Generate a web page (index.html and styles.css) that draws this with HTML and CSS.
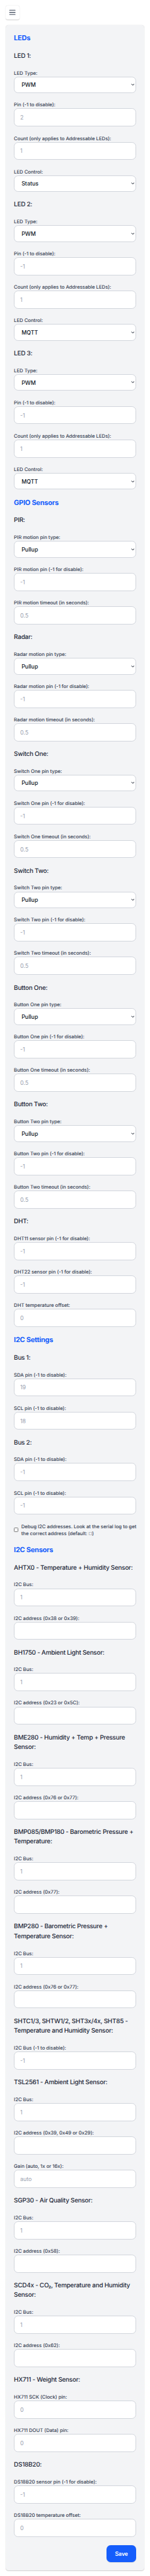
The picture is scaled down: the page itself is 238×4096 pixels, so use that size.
FILE: index.html
```html
<!DOCTYPE html>
<html lang="en">
<head>
<meta charset="utf-8">
<title>Hardware settings</title>
<link rel="stylesheet" href="styles.css">
</head>
<body>
<header class="topbar">
  <button class="menu" type="button" aria-label="Menu"><svg class="menu-icon" viewBox="0 0 24 24"><path d="M4 6h16M4 12h16M4 18h16"/></svg></button>
</header>
<svg width="0" height="0" class="defs"><symbol id="chevron" viewBox="0 0 10 6"><path d="M1 1.2l4 3.2 4-3.2"/></symbol></svg>
<form class="card">
  <h2>LEDs</h2>
  <h3>LED 1:</h3>
  <label class="field">LED Type:<span class="pick"><select><option>PWM</option></select><svg><use href="#chevron"/></svg></span></label>
  <label class="field">Pin (-1 to disable):<input placeholder="2"></label>
  <label class="field">Count (only applies to Addressable LEDs):<input placeholder="1"></label>
  <label class="field">LED Control:<span class="pick"><select><option>Status</option></select><svg><use href="#chevron"/></svg></span></label>
  <h3>LED 2:</h3>
  <label class="field">LED Type:<span class="pick"><select><option>PWM</option></select><svg><use href="#chevron"/></svg></span></label>
  <label class="field">Pin (-1 to disable):<input placeholder="-1"></label>
  <label class="field">Count (only applies to Addressable LEDs):<input placeholder="1"></label>
  <label class="field">LED Control:<span class="pick"><select><option>MQTT</option></select><svg><use href="#chevron"/></svg></span></label>
  <h3>LED 3:</h3>
  <label class="field">LED Type:<span class="pick"><select><option>PWM</option></select><svg><use href="#chevron"/></svg></span></label>
  <label class="field">Pin (-1 to disable):<input placeholder="-1"></label>
  <label class="field">Count (only applies to Addressable LEDs):<input placeholder="1"></label>
  <label class="field">LED Control:<span class="pick"><select><option>MQTT</option></select><svg><use href="#chevron"/></svg></span></label>

  <h2>GPIO Sensors</h2>
  <h3>PIR:</h3>
  <label class="field">PIR motion pin type:<span class="pick"><select><option>Pullup</option></select><svg><use href="#chevron"/></svg></span></label>
  <label class="field">PIR motion pin (-1 for disable):<input placeholder="-1"></label>
  <label class="field">PIR motion timeout (in seconds):<input placeholder="0.5"></label>
  <h3>Radar:</h3>
  <label class="field">Radar motion pin type:<span class="pick"><select><option>Pullup</option></select><svg><use href="#chevron"/></svg></span></label>
  <label class="field">Radar motion pin (-1 for disable):<input placeholder="-1"></label>
  <label class="field">Radar motion timeout (in seconds):<input placeholder="0.5"></label>
  <h3>Switch One:</h3>
  <label class="field">Switch One pin type:<span class="pick"><select><option>Pullup</option></select><svg><use href="#chevron"/></svg></span></label>
  <label class="field">Switch One pin (-1 for disable):<input placeholder="-1"></label>
  <label class="field">Switch One timeout (in seconds):<input placeholder="0.5"></label>
  <h3>Switch Two:</h3>
  <label class="field">Switch Two pin type:<span class="pick"><select><option>Pullup</option></select><svg><use href="#chevron"/></svg></span></label>
  <label class="field">Switch Two pin (-1 for disable):<input placeholder="-1"></label>
  <label class="field">Switch Two timeout (in seconds):<input placeholder="0.5"></label>
  <h3>Button One:</h3>
  <label class="field">Button One pin type:<span class="pick"><select><option>Pullup</option></select><svg><use href="#chevron"/></svg></span></label>
  <label class="field">Button One pin (-1 for disable):<input placeholder="-1"></label>
  <label class="field">Button One timeout (in seconds):<input placeholder="0.5"></label>
  <h3>Button Two:</h3>
  <label class="field">Button Two pin type:<span class="pick"><select><option>Pullup</option></select><svg><use href="#chevron"/></svg></span></label>
  <label class="field">Button Two pin (-1 for disable):<input placeholder="-1"></label>
  <label class="field">Button Two timeout (in seconds):<input placeholder="0.5"></label>
  <h3>DHT:</h3>
  <label class="field">DHT11 sensor pin (-1 for disable):<input placeholder="-1"></label>
  <label class="field">DHT22 sensor pin (-1 for disable):<input placeholder="-1"></label>
  <label class="field">DHT temperature offset:<input placeholder="0"></label>

  <h2>I2C Settings</h2>
  <h3>Bus 1:</h3>
  <label class="field">SDA pin (-1 to disable):<input placeholder="19"></label>
  <label class="field">SCL pin (-1 to disable):<input placeholder="18"></label>
  <h3>Bus 2:</h3>
  <label class="field">SDA pin (-1 to disable):<input placeholder="-1"></label>
  <label class="field">SCL pin (-1 to disable):<input placeholder="-1"></label>
  <label class="check"><input type="checkbox"><span>Debug I2C addresses. Look at the serial log to get<br>the correct address (default: <span class="box">□</span>)</span></label>

  <h2>I2C Sensors</h2>
  <h3>AHTX0 - Temperature + Humidity Sensor:</h3>
  <label class="field">I2C Bus:<input placeholder="1"></label>
  <label class="field">I2C address (0x38 or 0x39):<input></label>
  <h3>BH1750 - Ambient Light Sensor:</h3>
  <label class="field">I2C Bus:<input placeholder="1"></label>
  <label class="field">I2C address (0x23 or 0x5C):<input></label>
  <h3>BME280 - Humidity + Temp + Pressure<br>Sensor:</h3>
  <label class="field">I2C Bus:<input placeholder="1"></label>
  <label class="field">I2C address (0x76 or 0x77):<input></label>
  <h3>BMP085/BMP180 - Barometric Pressure +<br>Temperature:</h3>
  <label class="field">I2C Bus:<input placeholder="1"></label>
  <label class="field">I2C address (0x77):<input></label>
  <h3>BMP280 - Barometric Pressure +<br>Temperature Sensor:</h3>
  <label class="field">I2C Bus:<input placeholder="1"></label>
  <label class="field">I2C address (0x76 or 0x77):<input></label>
  <h3>SHTC1/3, SHTW1/2, SHT3x/4x, SHT85 -<br>Temperature and Humidity Sensor:</h3>
  <label class="field">I2C Bus (-1 to disable):<input placeholder="-1"></label>
  <h3>TSL2561 - Ambient Light Sensor:</h3>
  <label class="field">I2C Bus:<input placeholder="1"></label>
  <label class="field">I2C address (0x39, 0x49 or 0x29):<input></label>
  <label class="field">Gain (auto, 1x or 16x):<input placeholder="auto"></label>
  <h3>SGP30 - Air Quality Sensor:</h3>
  <label class="field">I2C Bus:<input placeholder="1"></label>
  <label class="field">I2C address (0x58):<input></label>
  <h3>SCD4x - CO₂, Temperature and Humidity<br>Sensor:</h3>
  <label class="field">I2C Bus:<input placeholder="1"></label>
  <label class="field">I2C address (0x62):<input></label>
  <h3>HX711 - Weight Sensor:</h3>
  <label class="field">HX711 SCK (Clock) pin:<input placeholder="0"></label>
  <label class="field">HX711 DOUT (Data) pin:<input placeholder="0"></label>
  <h3>DS18B20:</h3>
  <label class="field">DS18B20 sensor pin (-1 for disable):<input placeholder="-1"></label>
  <label class="field">DS18B20 temperature offset:<input placeholder="0"></label>
  <button class="save" type="button">Save</button>
</form>
</body>
</html>
```
FILE: styles.css
```css
* { box-sizing: border-box; margin: 0; }
html { font-size: 8.8467px; overflow: hidden; }
body {
  background: #fff;
  padding: 1rem;
  font-family: Inter, "Liberation Sans", sans-serif;
  color: #101828;
  text-rendering: geometricPrecision;
}
.defs { display: block; }
.topbar { height: 2.5rem; margin-bottom: 1rem; }
.menu {
  display: flex;
  align-items: center;
  justify-content: center;
  width: 2.5rem;
  height: 2.5rem;
  padding: 0;
  border: 0;
  border-radius: .375rem;
  background: #fff;
  box-shadow: 0 .0625rem .1875rem rgba(0,0,0,.1), 0 .0625rem .125rem rgba(0,0,0,.1);
}
.menu-icon {
  width: 1.5rem;
  height: 1.5rem;
  fill: none;
  stroke: #364153;
  stroke-width: 2;
  stroke-linecap: round;
}
.card {
  display: flex;
  flex-direction: column;
  gap: 1.5rem;
  padding: 1.5rem;
  border-radius: .5rem;
  background: #f3f4f6;
  box-shadow: 0 .0625rem .1875rem rgba(0,0,0,.1), 0 .0625rem .125rem rgba(0,0,0,.1);
}
h2 { font-size: 1.25rem; line-height: 1.75rem; font-weight: 700; letter-spacing: -.025em; color: #155dfc; }
h3 { font-size: 1.125rem; line-height: 1.75rem; font-weight: 550; letter-spacing: -.026em; color: #1e2939; white-space: nowrap; }
.field {
  display: flex;
  flex-direction: column;
  font-size: .875rem;
  line-height: 1.25rem;
  font-weight: 500;
  letter-spacing: -.003em;
  color: #364153;
  white-space: nowrap;
}
.field input, .field select {
  display: block;
  width: 100%;
  height: 3.25rem;
  padding: 0 1rem;
  border: .125rem solid #d1d5dc;
  border-radius: .75rem;
  background: #fff;
  font: 400 1rem/1.5rem Inter, "Liberation Sans", sans-serif;
  color: #101828;
}
.field input::placeholder { color: #99a1af; opacity: 1; }
.pick { display: grid; align-items: center; }
.pick > * { grid-area: 1 / 1; }
.field select { height: 3rem; padding-left: 1.25rem; appearance: none; font-weight: 500; }
.pick svg {
  justify-self: end;
  width: .625rem;
  height: .375rem;
  margin-right: .3rem;
  fill: none;
  stroke: #101828;
  stroke-width: 1.8;
}
.check {
  display: flex;
  align-items: center;
  gap: .5rem;
  height: 2.5rem;
  font-size: .875rem;
  line-height: 1.25rem;
  font-weight: 500;
  letter-spacing: -.003em;
  color: #364153;
  white-space: nowrap;
}
.check input {
  flex: none;
  appearance: none;
  width: .8125rem;
  height: .8125rem;
  border: .0625rem solid #767676;
  border-radius: .15rem;
  background: #fff;
}
.box {
  font: 400 .77em/0 "DejaVu Sans", sans-serif;
  vertical-align: .1em;
}
.save {
  align-self: flex-end;
  width: 5.25rem;
  height: 3rem;
  padding: 0;
  border: 0;
  border-radius: .75rem;
  background: #155dfc;
  color: #fff;
  font: 600 1rem/1.5rem Inter, "Liberation Sans", sans-serif;
  letter-spacing: -.01em;
  box-shadow: 0 .0625rem .125rem rgba(0,0,0,.1);
}
```
